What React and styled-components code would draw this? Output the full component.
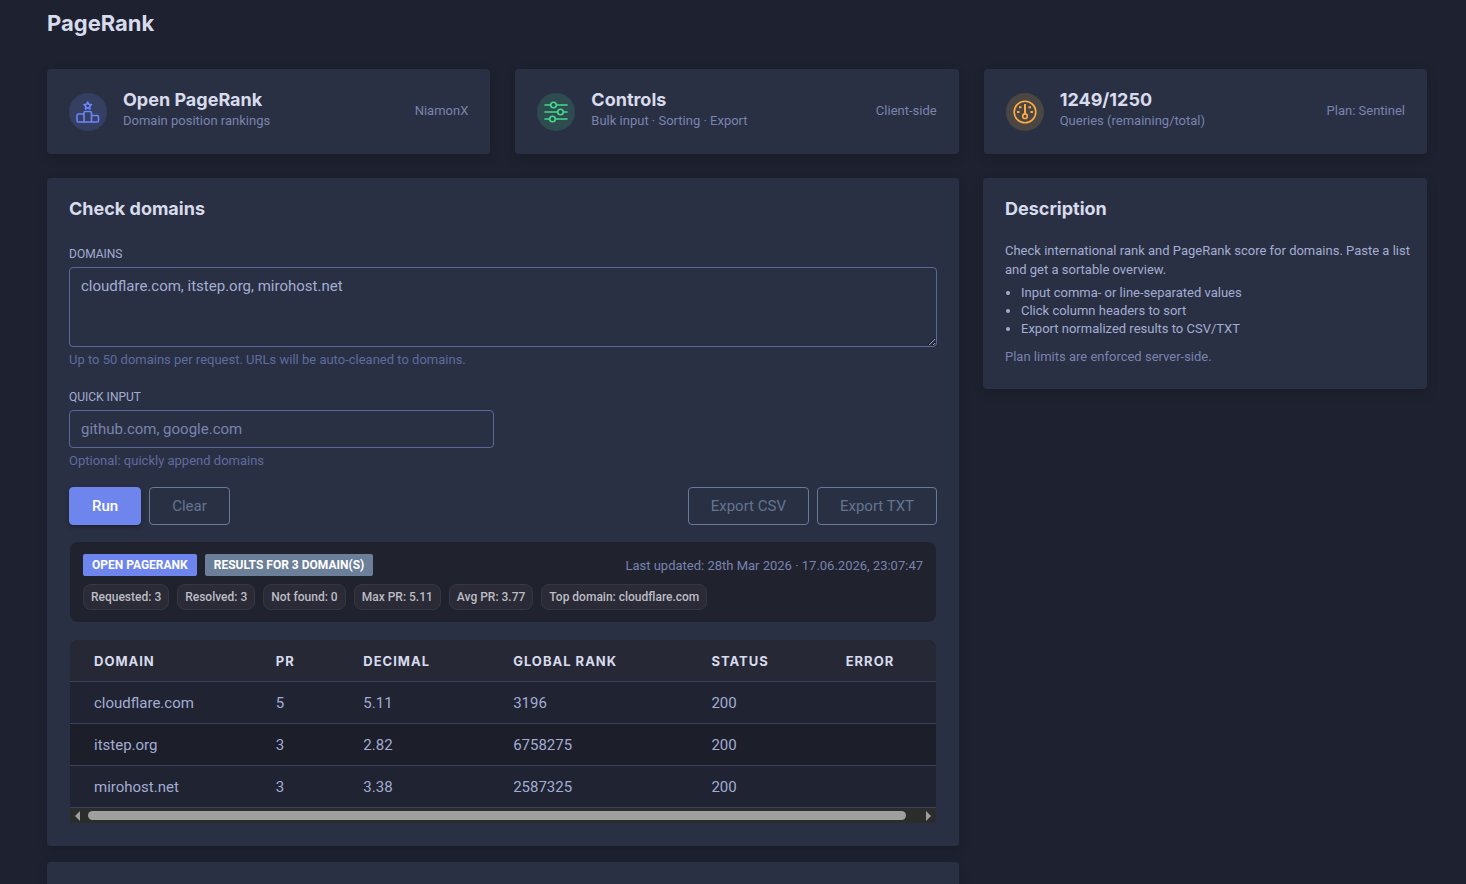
import React from 'react'
import styled, {createGlobalStyle} from 'styled-components'

const bodyFont = "Roboto, 'Noto Sans', sans-serif"
const headerFont = "Inter, 'Open Sans', sans-serif"

const GlobalStyle = createGlobalStyle`
  * {
    box-sizing: border-box;
  }

  body {
    margin: 0;
    background-color: #1e212f;
    color: #a3b1d9;
    font-family: ${bodyFont};
    font-size: 13px;
    line-height: 19px;
  }
`

const Page = styled.div`
  height: 100vh;
  overflow: hidden;
  padding: 8px 39px 0 47px;
`

const PageTitle = styled.h1`
  margin: 0 0 30px;
  font-family: ${headerFont};
  font-size: 22px;
  line-height: 31px;
  font-weight: 700;
  color: #d7dbec;
`

const Title = styled.h2`
  margin: 0;
  font-family: ${headerFont};
  font-size: 18px;
  line-height: 22px;
  font-weight: 700;
  color: #d7dbec;
`

const Panel = styled.section`
  background-color: #2a3043;
  border-radius: 4px;
  box-shadow: 0 4px 12px rgba(0, 0, 0, 0.15);
`

const Stats = styled.div`
  display: grid;
  grid-template-columns: repeat(3, 1fr);
  gap: 25px;
  margin-bottom: 24px;
`

const StatCard = styled(Panel)`
  display: flex;
  align-items: center;
  height: 85px;
  padding: 0 22px;
`

const IconCircle = styled.span`
  display: flex;
  align-items: center;
  justify-content: center;
  flex: none;
  width: 38px;
  height: 38px;
  margin-right: 16px;
  border-radius: 50%;
  color: ${({color}) => color};
  background-color: ${({$tint}) => $tint};
`

const StatText = styled.div`
  flex: 1;
  padding-bottom: 4px;
`

const Muted = styled.span`
  color: #7983ae;
`

const StatSide = styled(Muted)`
  padding-bottom: 2px;
`

const Columns = styled.div`
  display: grid;
  grid-template-columns: 912fr 444fr;
  gap: 24px;
  align-items: start;
`

const Main = styled.main`
  display: flex;
  flex-direction: column;
  gap: 16px;
  min-width: 0;
`

const CheckPanel = styled(Panel)`
  padding: 20px 22px 23px;
`

const NextPanel = styled(Panel)`
  height: 200px;
`

const Field = styled.div`
  display: flex;
  flex-direction: column;
  width: ${({$half}) => $half ? '49%' : '100%'};
  margin-top: ${({$first}) => $first ? 24 : 18}px;
`

const Label = styled.label`
  margin-bottom: 2px;
  font-size: 12px;
  line-height: 21px;
  text-transform: uppercase;
  color: #a3add2;
`

const controlStyle = `
  width: 100%;
  padding: 8px 11px;
  border: 1px solid #5b679b;
  border-radius: 4px;
  background-color: transparent;
  color: #a3add2;
  font-family: ${bodyFont};
  font-size: 15px;
  line-height: 20px;
  outline: none;
`

const TextArea = styled.textarea`
  ${controlStyle}
  display: block;
  height: 80px;
  resize: vertical;
`

const Input = styled.input`
  ${controlStyle}
  height: 38px;

  &::placeholder {
    color: #7983ae;
    opacity: 1;
  }
`

const Help = styled.span`
  margin-top: 3px;
  color: #5f6b9f;
`

const Row = styled.div`
  display: flex;
  flex-wrap: wrap;
  align-items: center;
  gap: 8px;
`

const Actions = styled(Row)`
  margin-top: 17px;
`

const Spacer = styled.span`
  flex: 1;
`

const Button = styled.button`
  height: 38px;
  padding: 0 22px;
  border: 1px solid ${({$primary}) => $primary ? '#6d85ed' : '#68799a'};
  border-radius: 4px;
  background-color: ${({$primary}) => $primary ? '#6d85ed' : 'transparent'};
  box-shadow: ${({$primary}) => $primary ? '0 2px 4px rgba(0, 0, 0, 0.3)' : 'none'};
  color: ${({$primary}) => $primary ? '#ffffff' : '#64748f'};
  font-family: ${bodyFont};
  font-size: 15px;
  font-weight: ${({$primary}) => $primary ? 500 : 400};
`

const Summary = styled.div`
  display: flex;
  flex-direction: column;
  gap: 8px;
  margin: 17px 1px 0;
  padding: 12px 13px;
  border-radius: 8px;
  background-color: #20222e;
`

const Badge = styled.span`
  padding: 0 9px;
  border-radius: 2px;
  background-color: ${({$primary}) => $primary ? '#6d85ed' : '#6c7f99'};
  color: #ffffff;
  font-size: 12px;
  line-height: 22px;
  font-weight: 700;
  text-transform: uppercase;
`

const Chip = styled.span`
  padding: 0 7px;
  border: 1px solid #363743;
  border-radius: 8px;
  background-color: #2a2b37;
  color: #bcbdc4;
  font-size: 12px;
  line-height: 24px;
  font-weight: 500;
`

const TableWrap = styled.div`
  margin: 18px 1px 0;
  border-radius: 8px 8px 0 0;
  overflow: hidden;
`

const Table = styled.table`
  width: 100%;
  table-layout: fixed;
  border-collapse: separate;
  border-spacing: 0;
  background-color: #202332;
  font-size: 15px;

  tbody tr:nth-child(even) {
    background-color: #1c1e2a;
  }
`

const Th = styled.th`
  width: ${({$width}) => $width};
  height: 42px;
  padding: 2px 0 0 24px;
  border-bottom: 1px solid #3a415c;
  background-color: #262836;
  color: #d7dbec;
  font-family: ${headerFont};
  font-size: 13px;
  font-weight: 700;
  letter-spacing: 1px;
  text-align: left;
  text-transform: uppercase;
`

const Td = styled.td`
  height: 42px;
  padding: 2px 0 0 24px;
  border-bottom: 1px solid #3a415c;
  color: #a3add2;
`

const ScrollBar = styled.div`
  display: flex;
  align-items: center;
  gap: 8px;
  height: 15px;
  padding: 0 5px;
  background-color: #2c2c2c;
`

const Thumb = styled.div`
  flex: 1;
  height: 9px;
  margin-right: 12px;
  border-radius: 5px;
  background-color: #9f9f9f;
`

const Arrow = styled.span`
  border: solid transparent;
  border-width: 5px 0;
  border-left: ${({$left}) => $left ? '0' : '5px solid #9f9f9f'};
  border-right: ${({$left}) => $left ? '5px solid #9f9f9f' : '0'};
`

const DescriptionPanel = styled(Panel)`
  padding: 20px 12px 23px 22px;
  color: #a3add2;

  p {
    margin: 0;
  }

  ul {
    margin: 5px 0 9px;
    padding-left: 16px;
    line-height: 18px;
  }
`

const Intro = styled.p`
  && {
    margin-top: 21px;
  }
`

const RankIcon = () =>
  <svg width='24' height='24' viewBox='0 0 24 24' fill='none' stroke='currentColor' strokeWidth='1.6' strokeLinejoin='round'>
    <path d='M11.7 2l1.1 2.3 2.6.3-1.9 1.8.5 2.6-2.3-1.2L9.4 9l.5-2.6L8 4.6l2.6-.3z' />
    <path d='M8 22V12.9q0-1.4 1.4-1.4h4.7q1.400 0 1.400 1.400V22z' />
    <path d='M8 14H2.400Q1 14 1 15.400v5.200Q1 22 2.400 22H8M15.500 15.500h5.600q1.400 0 1.400 1.400v3.700q0 1.400-1.400 1.400h-5.600' />
  </svg>

const ControlsIcon = () =>
  <svg width='24' height='24' viewBox='0 0 24 24' fill='none' stroke='currentColor' strokeWidth='1.6' strokeLinecap='round'>
    <path d='M1 5h5.500M12.500 5H23M1 12h12.500M19.500 12H23M1 19h4.500M11.500 19H23' />
    <circle cx='9.5' cy='5' r='2.8' />
    <circle cx='16.5' cy='12' r='2.8' />
    <circle cx='8.5' cy='19' r='2.8' />
  </svg>

const GaugeIcon = () =>
  <svg width='24' height='24' viewBox='0 0 24 24' fill='none' stroke='currentColor' strokeWidth='1.6'>
    <circle cx='12' cy='12' r='10.8' />
    <path d='M12 4v10' strokeWidth='2' />
    <circle cx='12' cy='16.2' r='2.3' />
    <path d='M4 12h2.500M17.500 12H20M6 7.200h2.500M15.500 7.200H18' strokeWidth='2' />
  </svg>

const stats = [
  {title: 'Open PageRank', text: 'Domain position rankings', side: 'NiamonX', color: '#6d85fb', tint: '#353f61', Icon: RankIcon},
  {title: 'Controls', text: 'Bulk input · Sorting · Export', side: 'Client-side', color: '#45d98a', tint: '#2e4b50', Icon: ControlsIcon},
  {title: '1249/1250', text: 'Queries (remaining/total)', side: 'Plan: Sentinel', color: '#ffab44', tint: '#4a4643', Icon: GaugeIcon},
]

const chips = ['Requested: 3', 'Resolved: 3', 'Not found: 0', 'Max PR: 5.11', 'Avg PR: 3.77', 'Top domain: cloudflare.com']

const headers = [
  ['Domain', '21%'],
  ['PR', '10.1%'],
  ['Decimal', '17.3%'],
  ['Global rank', '22.9%'],
  ['Status', '15.5%'],
  ['Error', '13.2%'],
]

const rows = [
  ['cloudflare.com', 5, '5.11', 3196, 200, ''],
  ['itstep.org', 3, '2.82', 6758275, 200, ''],
  ['mirohost.net', 3, '3.38', 2587325, 200, ''],
]

const Results = () =>
  <TableWrap>
    <Table>
      <thead>
        <tr>
          {headers.map(([name, width]) => <Th key={name} $width={width}>{name}</Th>)}
        </tr>
      </thead>
      <tbody>
        {rows.map(row =>
          <tr key={row[0]}>
            {row.map((cell, index) => <Td key={index}>{cell}</Td>)}
          </tr>)}
      </tbody>
    </Table>
    <ScrollBar>
      <Arrow $left />
      <Thumb />
      <Arrow />
    </ScrollBar>
  </TableWrap>

const CheckDomains = () =>
  <CheckPanel>
    <Title>Check domains</Title>
    <Field $first>
      <Label htmlFor='domains'>Domains</Label>
      <TextArea id='domains' spellCheck={false} defaultValue='cloudflare.com, itstep.org, mirohost.net' />
      <Help>Up to 50 domains per request. URLs will be auto-cleaned to domains.</Help>
    </Field>
    <Field $half>
      <Label htmlFor='quick'>Quick input</Label>
      <Input id='quick' type='text' placeholder='github.com, google.com' />
      <Help>Optional: quickly append domains</Help>
    </Field>
    <Actions>
      <Button type='button' $primary>Run</Button>
      <Button type='button'>Clear</Button>
      <Spacer />
      <Button type='button'>Export CSV</Button>
      <Button type='button'>Export TXT</Button>
    </Actions>
    <Summary>
      <Row>
        <Badge $primary>Open PageRank</Badge>
        <Badge>Results for 3 domain(s)</Badge>
        <Spacer />
        <Muted>Last updated: 28th Mar 2026 · 17.06.2026, 23:07:47</Muted>
      </Row>
      <Row>
        {chips.map(chip => <Chip key={chip}>{chip}</Chip>)}
      </Row>
    </Summary>
    <Results />
  </CheckPanel>

const Description = () =>
  <DescriptionPanel as='aside'>
    <Title>Description</Title>
    <Intro>Check international rank and PageRank score for domains. Paste a list and get a sortable overview.</Intro>
    <ul>
      <li>Input comma- or line-separated values</li>
      <li>Click column headers to sort</li>
      <li>Export normalized results to CSV/TXT</li>
    </ul>
    <p><Muted>Plan limits are enforced server-side.</Muted></p>
  </DescriptionPanel>

export default () =>
  <Page>
    <GlobalStyle />
    <PageTitle>PageRank</PageTitle>
    <Stats>
      {stats.map(({title, text, side, color, tint, Icon}) =>
        <StatCard key={title}>
          <IconCircle color={color} $tint={tint}><Icon /></IconCircle>
          <StatText>
            <Title>{title}</Title>
            <Muted>{text}</Muted>
          </StatText>
          <StatSide>{side}</StatSide>
        </StatCard>)}
    </Stats>
    <Columns>
      <Main>
        <CheckDomains />
        <NextPanel />
      </Main>
      <Description />
    </Columns>
  </Page>
